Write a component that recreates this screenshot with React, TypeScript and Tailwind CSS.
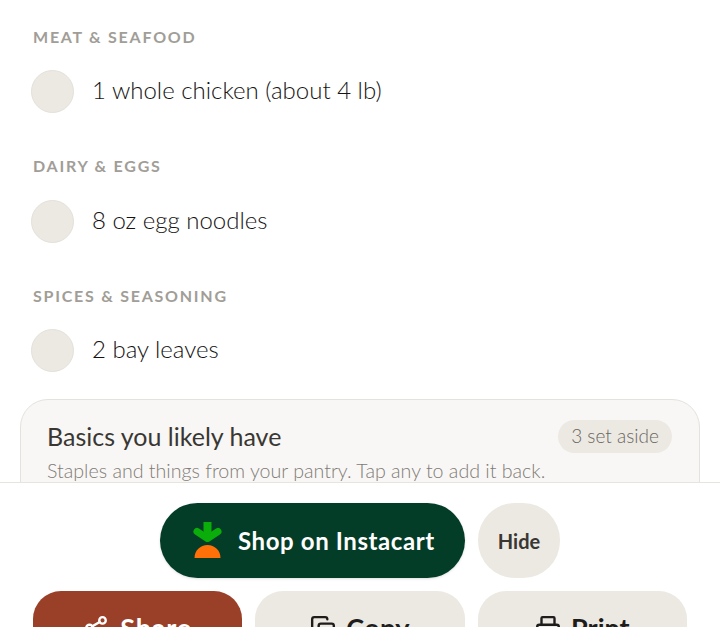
import { Copy, Printer, Share2 } from 'lucide-react';

const groups = [
  { title: 'Meat & Seafood', item: '1 whole chicken (about 4 lb)' },
  { title: 'Dairy & Eggs', item: '8 oz egg noodles' },
  { title: 'Spices & Seasoning', item: '2 bay leaves' },
];

function CarrotLogo() {
  return (
    <svg width="29" height="37" viewBox="0 0 29 37" className="shrink-0">
      <rect x="10.500" y="0" width="8" height="14" fill="#0aad0a" />
      <path d="M4 9.500 14.500 16.500 25 9.500" fill="none" stroke="#0aad0a" strokeWidth="7" strokeLinecap="round" strokeLinejoin="round" />
      <path d="M1.500 36C1.500 28.500 7.300 23 14.500 23S27.500 28.500 27.500 36z" fill="#ff7009" />
    </svg>
  );
}

export default function App() {
  return (
    <div className="h-[627px] overflow-hidden flex flex-col bg-white font-['Lato','Noto_Sans',sans-serif]">
      <div className="h-[482px] shrink-0 overflow-hidden">
        <div className="px-[33px] pt-[27.600px]">
          {groups.map(group => (
            <div key={group.title} className="h-[129.500px]">
              <p className="h-[18px] text-[16px] leading-[17px] font-bold tracking-[0.11em] uppercase text-[#a19d97]">{group.title}</p>
              <div className="flex items-center mt-[24.600px] -ml-[2px]">
                <span className="w-[43px] h-[43px] rounded-full bg-[#ece9e3] border border-[#e4e1db] shrink-0" />
                <span className="ml-[18px] pb-[3px] text-[24px] leading-[32px] font-light text-[#141312]">{group.item}</span>
              </div>
            </div>
          ))}
        </div>
        <div className="mx-[20px] -mt-[17.100px] h-[120px] rounded-[28px] bg-[#f8f7f5] border border-[#e4e2dd] px-[26px] pt-[20px]">
          <div className="flex items-center justify-between">
            <h2 className="text-[25px] leading-[31px] font-normal text-[#3a3733]">Basics you likely have</h2>
            <span className="h-[33px] w-[114px] mr-[1px] text-center rounded-full bg-[#ece9e3] text-[19px] leading-[32px] font-light text-[#6a665f]">3 set aside</span>
          </div>
          <p className="mt-[6px] text-[19.650px] leading-[24px] font-light text-[#7f7b75] whitespace-nowrap">Staples and things from your pantry. Tap any to add it back.</p>
        </div>
      </div>

      <div className="flex-1 bg-white border-t border-[#e6e4df] relative px-[33px] pt-[20px]">
        <div className="flex justify-center gap-[13px]">
          <button className="w-[305px] h-[75px] rounded-full bg-[#033c27] flex items-center pl-[33px] gap-[16px] shadow-sm">
            <CarrotLogo />
            <span className="text-[24px] font-bold text-white tracking-[0.025em]">Shop on Instacart</span>
          </button>
          <button className="w-[82px] h-[75px] rounded-[37px] bg-[#ece9e3] text-[20px] font-bold text-[#3a3733]">Hide</button>
        </div>
        <div className="grid grid-cols-3 gap-[13px] mt-[13px]">
          <button className="h-[74px] rounded-[28px] bg-[#9b4028] text-white flex items-center justify-center gap-[11px] text-[27px] font-bold tracking-[0.03em]">
            <Share2 size={26} strokeWidth={2.2} />
            Share
          </button>
          <button className="h-[74px] rounded-[28px] bg-[#ece9e3] text-[#1f1d1b] flex items-center justify-center gap-[10px] text-[27px] font-bold tracking-[0.01em]">
            <Copy size={26} strokeWidth={2.2} />
            Copy
          </button>
          <button className="h-[74px] rounded-[28px] bg-[#ece9e3] text-[#1f1d1b] flex items-center justify-center gap-[10px] text-[27px] font-bold">
            <Printer size={26} strokeWidth={2.2} />
            Print
          </button>
        </div>
      </div>
    </div>
  );
}
